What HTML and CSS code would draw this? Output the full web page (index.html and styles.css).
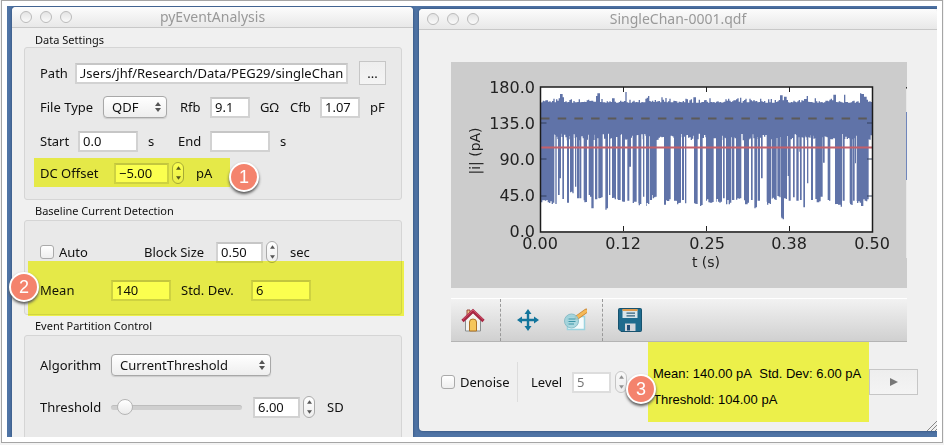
FILE: index.html
```html
<!DOCTYPE html>
<html lang="en">
<head>
<meta charset="utf-8">
<title>pyEventAnalysis</title>
<link rel="stylesheet" href="styles.css">
</head>
<body>
<svg class="defs" aria-hidden="true">
  <symbol id="arrows" viewBox="0 0 6 10"><path d="M0 4L3 0L6 4ZM0 6L3 10L6 6Z"/></symbol>
  <symbol id="up" viewBox="0 0 6 4"><path d="M0 4L3 0L6 4Z"/></symbol>
  <symbol id="down" viewBox="0 0 6 4"><path d="M0 0L3 4L6 0Z"/></symbol>
</svg>
<div class="frame">
<main class="desktop">
  <section class="window settings">
    <header class="titlebar">
      <span class="lights"><i></i><i></i><i></i></span>
      <h1>pyEventAnalysis</h1>
    </header>
    <div class="groups">
      <h2>Data Settings</h2>
      <div class="group data">
        <div class="row path-row">
          <label for="path">Path</label>
          <input id="path" class="field" type="text" value="/Users/jhf/Research/Data/PEG29/singleChan">
          <button class="square" type="button">...</button>
        </div>
        <div class="row type-row">
          <label for="ftype">File Type</label>
          <span class="select"><select id="ftype"><option>QDF</option></select><svg><use href="#arrows"/></svg></span>
          <label for="rfb">Rfb</label><input id="rfb" class="field tiny" type="text" value="9.1"><span>GΩ</span>
          <label for="cfb">Cfb</label><input id="cfb" class="field tiny" type="text" value="1.07"><span>pF</span>
        </div>
        <div class="row time-row">
          <label for="start">Start</label><input id="start" class="field medium" type="text" value="0.0"><span>s</span>
          <label for="end">End</label><input id="end" class="field medium" type="text" value=""><span>s</span>
        </div>
        <div class="row offset-row">
          <label for="dc">DC Offset</label><input id="dc" class="field spin" type="text" value="−5.00">
          <span class="stepper"><button type="button" aria-label="Increase"><svg><use href="#up"/></svg></button><button type="button" aria-label="Decrease"><svg><use href="#down"/></svg></button></span>
          <span>pA</span>
          <span class="badge">1</span>
        </div>
      </div>
      <h2>Baseline Current Detection</h2>
      <div class="group baseline">
        <div class="row block-row">
          <label class="check"><input type="checkbox">Auto</label>
          <label for="block">Block Size</label><input id="block" class="field small" type="text" value="0.50">
          <span class="stepper"><button type="button" aria-label="Increase"><svg><use href="#up"/></svg></button><button type="button" aria-label="Decrease"><svg><use href="#down"/></svg></button></span>
          <span>sec</span>
        </div>
        <div class="row mean-row">
          <label for="mean">Mean</label><input id="mean" class="field medium" type="text" value="140">
          <label for="sd">Std. Dev.</label><input id="sd" class="field medium" type="text" value="6">
          <span class="badge">2</span>
        </div>
      </div>
      <h2>Event Partition Control</h2>
      <div class="group partition">
        <div class="row algorithm-row">
          <label for="algo">Algorithm</label>
          <span class="select"><select id="algo"><option>CurrentThreshold</option></select><svg><use href="#arrows"/></svg></span>
        </div>
        <div class="row threshold-row">
          <label for="thr">Threshold</label>
          <input id="thr" type="range" min="0" max="100" value="5">
          <input class="field small" type="text" value="6.00" aria-label="Threshold value">
          <span class="stepper"><button type="button" aria-label="Increase"><svg><use href="#up"/></svg></button><button type="button" aria-label="Decrease"><svg><use href="#down"/></svg></button></span>
          <span>SD</span>
        </div>
      </div>
    </div>
  </section>

  <section class="window viewer">
    <header class="titlebar">
      <span class="lights"><i></i><i></i><i></i></span>
      <h1>SingleChan-0001.qdf</h1>
    </header>
    <div class="figure">
      <svg class="plot" viewBox="0 0 456 226" role="img" aria-label="Current against time">
        <path fill="#fff" d="M89.500 25H421V169H89.500Z"/>
        <svg x="89" y="24" width="332" height="146" viewBox="0 0 996 438">
          <path id="trace" fill="#6073a8"/>
        </svg>
        <path d="M90 56.500H421" stroke="#5c5a58" stroke-width="2" stroke-dasharray="8.500 8.200"/>
        <path d="M90 85.500H421" stroke="#c4606b" stroke-width="2"/>
        <path d="M90 61H95.500M90 97H95.500M90 134H95.500M416 61H421M416 97H421M416 134H421" stroke="#33405c" stroke-width="1"/>
        <path d="M172.500 25V30M172.500 164V169M255.500 25V30M255.500 164V169M338.500 25V30M338.500 164V169" stroke="#222" stroke-width="1"/>
        <path d="M89.500 25H421.500V170H89.500Z" fill="none" stroke="#1c1c1c" stroke-width="1.500"/>
        <path d="M455 27H456V196H455Z" fill="#e8e8e8"/><path d="M455 50H456V118H455Z" fill="#6f85bb"/><path d="M455 25H456V26.500H455Z" fill="#333"/>
        <g class="ticks">
          <g text-anchor="end"><text x="84" y="31">180.0</text><text x="84" y="67">135.0</text><text x="84" y="103">90.0</text><text x="84" y="139">45.0</text><text x="84" y="175">0.0</text></g>
          <g text-anchor="middle"><text x="89" y="187">0.00</text><text x="172" y="187">0.12</text><text x="256" y="187">0.25</text><text x="338" y="187">0.38</text><text x="421" y="187">0.50</text></g>
        </g>
        <g class="axis" text-anchor="middle"><text x="255" y="205">t (s)</text><text transform="translate(29 89) rotate(-90)">|i| (pA)</text></g>
      </svg>
    </div>
    <nav class="toolbar">
      <button type="button" aria-label="Home"><svg viewBox="0 0 24 24"><path d="M6 2H9V8H6Z" fill="#efc78a" stroke="#9b4b3c"/><path d="M4.500 12L12 4.500L19.500 12V23H4.500Z" fill="#f3f3ef" stroke="#8a8f8f"/><path d="M8.500 23V14Q8.500 11 12 11Q15.500 11 15.500 14V23Z" fill="#f5c65b" stroke="#ad7226"/><path d="M1.500 13L12 3L22.500 13" fill="none" stroke="#a92642" stroke-width="3.200"/><path d="M2 11.500L12 2L22 11.500" fill="none" stroke="#d8637a" stroke-width=".8"/></svg></button>
      <button type="button" aria-label="Pan"><svg viewBox="0 0 24 24"><path d="M12 1L15.500 6H13.200V10.800H18V8.500L23 12L18 15.500V13.200H13.200V18H15.500L12 23L8.500 18H10.800V13.200H6V15.500L1 12L6 8.500V10.800H10.800V6H8.500Z" fill="#12759c"/></svg></button>
      <button type="button" aria-label="Zoom"><svg viewBox="0 0 24 24"><path d="M4.500 8.500H21.500V21.500H4.500Z" fill="#f5fbfc" stroke="#9bd3df" stroke-width="1.500"/><path d="M14 9.500L23 3" stroke="#c78432" stroke-width="4.600" stroke-linecap="round"/><path d="M14.500 9L23 3" stroke="#f5b958" stroke-width="3" stroke-linecap="round"/><circle cx="8.500" cy="13" r="7" fill="#9fd2da" fill-opacity=".85" stroke="#88bdc8"/><path d="M5.500 11H12.500M5.500 13.500H12.500M5.500 16H11" stroke="#3d96a8" stroke-width="1.100"/></svg></button>
      <button type="button" aria-label="Save"><svg viewBox="0 0 24 24"><path d="M1.500 0.500H22.500Q23.500 0.500 23.500 1.500V22.500Q23.500 23.500 22.500 23.500H3L0.500 21V1.500Q0.500 0.500 1.500 0.500Z" fill="#1f6b8e" stroke="#17526e"/><path d="M4.500 1.500H19.500V10H4.500Z" fill="#d8e4ea"/><path d="M4.500 1H19.500V3H4.500Z" fill="#dd9a4d"/><path d="M8.500 5.200H17M8.500 7.800H17" stroke="#33627c" stroke-width="1.200"/><path d="M7 15.500H17.500V23H7Z" fill="#d3d6dc"/><path d="M9 17H12V22.500H9Z" fill="#234e78"/></svg></button>
    </nav>
    <footer class="controls">
      <label class="check"><input type="checkbox">Denoise</label>
      <label for="level">Level</label>
      <input id="level" class="field" type="text" value="5">
      <span class="stepper"><button type="button" aria-label="Increase"><svg><use href="#up"/></svg></button><button type="button" aria-label="Decrease"><svg><use href="#down"/></svg></button></span>
      <div class="stats"><p>Mean: 140.00 pA&nbsp; Std. Dev: 6.00 pA</p><p>Threshold: 104.00 pA</p><span class="badge">3</span></div>
      <button class="square play" type="button" aria-label="Play"><svg viewBox="0 0 8 8"><path d="M0 0L8 4L0 8Z"/></svg></button>
    </footer>
    <svg class="grip" viewBox="0 0 10 10"><path d="M0 10L10 0M4 10L10 4M8 10L10 8" stroke="#888" fill="none"/></svg>
  </section>
</main>
</div>
<script src="plot.js"></script>
</body>
</html>
```
FILE: styles.css
```css
* { box-sizing: border-box; }
body {
  margin: 0;
  background: #fff;
  color: #111;
  font: 13px/16px "Noto Sans", "Open Sans", sans-serif;
}
h1, h2, p { margin: 0; font-weight: 400; }
button, input, select { font: inherit; color: inherit; margin: 0; }
button { padding: 0; border: 0; background: none; }
.defs { position: absolute; width: 0; height: 0; }

.frame {
  height: 100vh;
  padding: 1px 2px 3px;
  background: #f3f3f3;
}
.desktop {
  display: grid;
  grid-template-columns: 401fr 518fr;
  grid-template-rows: minmax(0, 1fr);
  gap: 6px;
  height: 100%;
  padding: 1px 0 0 5px;
  overflow: hidden;
  background: #4f74a5;
  border: 5px solid #fff;
  outline: 1px solid #a5a5a5;
}
.window {
  position: relative;
  min-width: 0;
  background: #f0f0f0;
  border-radius: 4px 4px 0 0;
  box-shadow: 0 0 3px #29466f;
}
.titlebar {
  position: relative;
  flex: none;
  height: 21px;
  background: linear-gradient(#fcfcfc, #e8e8e8);
  border-bottom: 1px solid #c8c8c8;
  border-radius: 4px 4px 0 0;
}
.titlebar h1 {
  color: #999;
  font-size: 14px;
  line-height: 20px;
  text-align: center;
}
.lights {
  position: absolute;
  left: 8px;
  top: 4px;
  display: flex;
  gap: 8px;
}
.lights i {
  width: 12px;
  height: 12px;
  border: 1px solid #bbb;
  border-radius: 50%;
  background: linear-gradient(#e4e4e4, #fafafa);
}

.groups { padding: 5px 11px 0 12px; }
h2 {
  height: 20px;
  padding: 4px 11px 0;
  font-size: 11px;
  line-height: 14px;
}
.groups h2:first-child { height: 14px; padding-top: 0; }
.group {
  background: #e9e9e9;
  border: 1px solid #d5d5d5;
  border-radius: 3px;
  padding: 8px 15px 0 15px;
}
.group.data { height: 153px; }
.group.baseline { height: 95px; padding-top: 12px; }
.group.partition { height: 112px; }
.row {
  position: relative;
  display: grid;
  align-items: center;
  justify-items: start;
  height: 34px;
  white-space: nowrap;
}
.path-row { grid-template-columns: 35px 1fr 27px; }
.path-row .field { justify-self: stretch; margin-right: 11px; }
.type-row { grid-template-columns: 63px 77px 30px 50px 30px 30px 50px auto; }
.time-row { grid-template-columns: 38px 70px 30px 32px 70px auto; }
.offset-row { grid-template-columns: 74px 58px 24px auto; height: 30px; }
.block-row { grid-template-columns: 104px 72px 50px 24px auto; height: 38px; }
.mean-row { grid-template-columns: 71px 70px 70px auto; height: 38px; }
.algorithm-row { grid-template-columns: 71px 160px; height: 42px; }
.threshold-row { grid-template-columns: 71px 142px 50px 24px auto; height: 42px; }

.offset-row::after, .mean-row::after {
  content: "";
  position: absolute;
  background: #fbff4f;
  mix-blend-mode: multiply;
  pointer-events: none;
}
.offset-row::after { left: -6px; top: 0; width: 196px; height: 29px; }
.mean-row::after { left: -12px; right: -18px; top: -10px; height: 55px; }

.field {
  min-width: 0;
  height: 21px;
  padding: 0 3px;
  background: #fff;
  border: 2px solid #d2d2d2;
  border-top-color: #c6c6c6;
  border-radius: 0;
}
.tiny { width: 40px; }
.small { width: 47px; }
.spin { width: 55px; }
.medium { width: 60px; }
.square {
  height: 24px;
  background: linear-gradient(#eee, #f4f4f4);
  border: 1px solid #c6c6c6;
}
.path-row .square { width: 27px; }
.select { position: relative; }
.select select {
  appearance: none;
  display: block;
  width: 64px;
  height: 22px;
  padding: 0 8px;
  background: linear-gradient(#fff, #eee);
  border: 1px solid #a8a8a8;
  border-radius: 4px;
  box-shadow: 0 1px 1px #ccc;
}
.algorithm-row select { width: 160px; }
.select svg {
  position: absolute;
  right: 6px;
  top: 6px;
  width: 6px;
  height: 10px;
  fill: #555;
  pointer-events: none;
}
.stepper {
  display: flex;
  flex-direction: column;
  width: 12px;
  height: 22px;
  background: linear-gradient(#fff, #eee);
  border: 1px solid #aaa;
  border-radius: 6px;
}
.stepper button { flex: 1; display: grid; place-items: center; }
.stepper svg { width: 5px; height: 4px; fill: #555; }
.check { display: flex; align-items: center; gap: 5px; }
.check input {
  appearance: none;
  width: 14px;
  height: 14px;
  background: linear-gradient(#fff, #eee);
  border: 1px solid #aaa;
  border-radius: 3px;
}
input[type="range"] {
  appearance: none;
  width: 131px;
  height: 16px;
  background: none;
}
input[type="range"]::-webkit-slider-runnable-track {
  height: 5px;
  background: #cfcfcf;
  border-top: 1px solid #bdbdbd;
  border-radius: 3px;
}
input[type="range"]::-webkit-slider-thumb {
  appearance: none;
  width: 16px;
  height: 16px;
  margin-top: -7px;
  background: linear-gradient(#fff, #eaeaea);
  border: 1px solid #b5b5b5;
  border-radius: 50%;
}
.badge {
  position: absolute;
  z-index: 2;
  width: 30px;
  height: 30px;
  border: 2px solid #fff;
  border-radius: 50%;
  background: #f4836d;
  box-shadow: 0 2px 3px #555;
  color: #fff;
  font: 18px/26px "Liberation Sans", sans-serif;
  text-align: center;
}
.offset-row .badge { left: 189px; top: 4px; }
.mean-row .badge { left: -31px; top: 1px; }

.viewer {
  display: flex;
  flex-direction: column;
  margin: 2px 0 6px;
  border-radius: 4px 0 0 4px;
}
.figure { margin: 32px 30px 10px 32px; background: #ccc; }
.plot { display: block; width: 100%; }
.plot text { fill: #222; font-family: "DejaVu Sans", sans-serif; }
.ticks { font-size: 16px; }
.axis { font-size: 14px; }
.toolbar {
  display: flex;
  flex: none;
  align-items: center;
  height: 44px;
  margin: 0 30px 0 32px;
  padding-left: 10px;
  background: linear-gradient(#f2f2f2, #d0d0d0);
  border-top: 1px solid #fff;
  border-bottom: 1px solid #b4b4b4;
}
.toolbar svg { display: block; width: 24px; height: 24px; }
.toolbar button:nth-child(1), .toolbar button:nth-child(3) {
  padding: 9px 15px 9px 0;
  border-right: 1px dashed #999;
}
.toolbar button:nth-child(2) { padding: 0 23px 0 15px; }
.toolbar button:nth-child(4) { padding-left: 15px; }

.controls {
  display: flex;
  flex: none;
  align-items: center;
  height: 80px;
  padding: 0 19px 0 22px;
}
.controls .check { height: 40px; width: 77px; border-right: 1px solid #ddd; }
.controls .check + label { width: 54px; padding-left: 13px; }
.controls .field { width: 39px; margin-right: 4px; color: #777; border-color: #ddd; }
.controls .stepper { opacity: .6; }
.stats {
  position: relative;
  flex: 1;
  height: 80px;
  margin-left: 21px;
  padding: 19px 5px;
  background: #ecf04a;
  color: #000;
  font: 13px/26px "Liberation Sans", sans-serif;
  white-space: nowrap;
}
.stats .badge { left: -22px; top: 32px; }
.play { width: 49px; height: 26px; }
.play svg { display: block; width: 8px; height: 8px; margin: auto; fill: #777; }
.grip { position: absolute; right: 0; bottom: 0; width: 10px; height: 10px; }
```
FILE: plot.js
```js
// Excursions of the current trace: [start, end, depth] in trace units.
const bars = [
  [0,43,350],[46,50,354],[54,59,327],[59,63,277],[67,72,339],[81,87,350],[90,101,322],[105,109,302],
  [111,117,337],[118,124,337],[131,141,348],[146,154,332],[154,161,367],[165,172,340],[175,188,334],
  [196,204,367],[207,211,327],[216,228,340],[232,242,342],[246,255,347],[262,268,344],[268,273,242],
  [278,290,347],[295,304,354],[309,313,332],[318,328,354],[330,336,342],[336,350,332],[372,378,356],
  [378,392,340],[402,410,344],[410,423,350],[426,432,342],[435,439,352],[462,473,354],[480,488,357],
  [498,521,348],[528,546,347],[549,554,337],[558,574,350],[576,583,342],[588,604,337],[612,627,350],
  [633,638,342],[643,651,364],[653,660,344],[663,668,277],[680,693,354],[695,710,342],[712,722,334],
  [723,732,400],[732,741,339],[743,746,270],[746,752,344],[759,764,334],[769,776,344],[777,779,197],
  [780,785,342],[790,795,364],[801,805,292],[813,819,342],[826,842,346],[842,848,332],[849,854,230],
  [863,871,344],[885,894,354],[894,906,362],[908,914,344],[929,938,357],[939,944,344],[945,948,232],
  [950,963,350],[963,970,360],[970,986,340]
];
const peaks = { 62: 24, 68: 34, 168: 30, 174: 22, 255: 18, 324: 30, 376: 36, 462: 34, 722: 28, 734: 32, 800: 30, 882: 26, 912: 26, 960: 22, 966: 24, 974: 32 };
let seed = 7;
const noise = () => (seed = (seed * 16807) % 2147483647) / 2147483647;
let d = "M0 50";
for (let x = 0; x < 996; x += 4) {
  const key = Object.keys(peaks).find(p => Math.abs(p - x) < 3);
  const y = key ? peaks[key] : Math.round(50 - noise() * noise() * 16);
  d += `V${y}H${x + 4}`;
}
for (let x = 996; x > 0; x -= 4) d += `V${Math.round(143 + noise() * 20)}H${x - 4}`;
d += "Z";
// Bars wind the same way as the band, so that their overlap stays filled.
for (const [a, b, depth] of bars) {
  d += `M${b} 140`;
  for (let x = b, i = 0; x > a; x -= 4, i++) {
    const y = i === 0 || b - a < 8 ? depth : depth + Math.round(noise() * 14 - 8);
    d += `V${y}H${Math.max(x - 4, a)}`;
  }
  d += "V140Z";
}
document.getElementById("trace").setAttribute("d", d);

// Long paths show their end.
const path = document.getElementById("path");
path.scrollLeft = path.scrollWidth;
```
